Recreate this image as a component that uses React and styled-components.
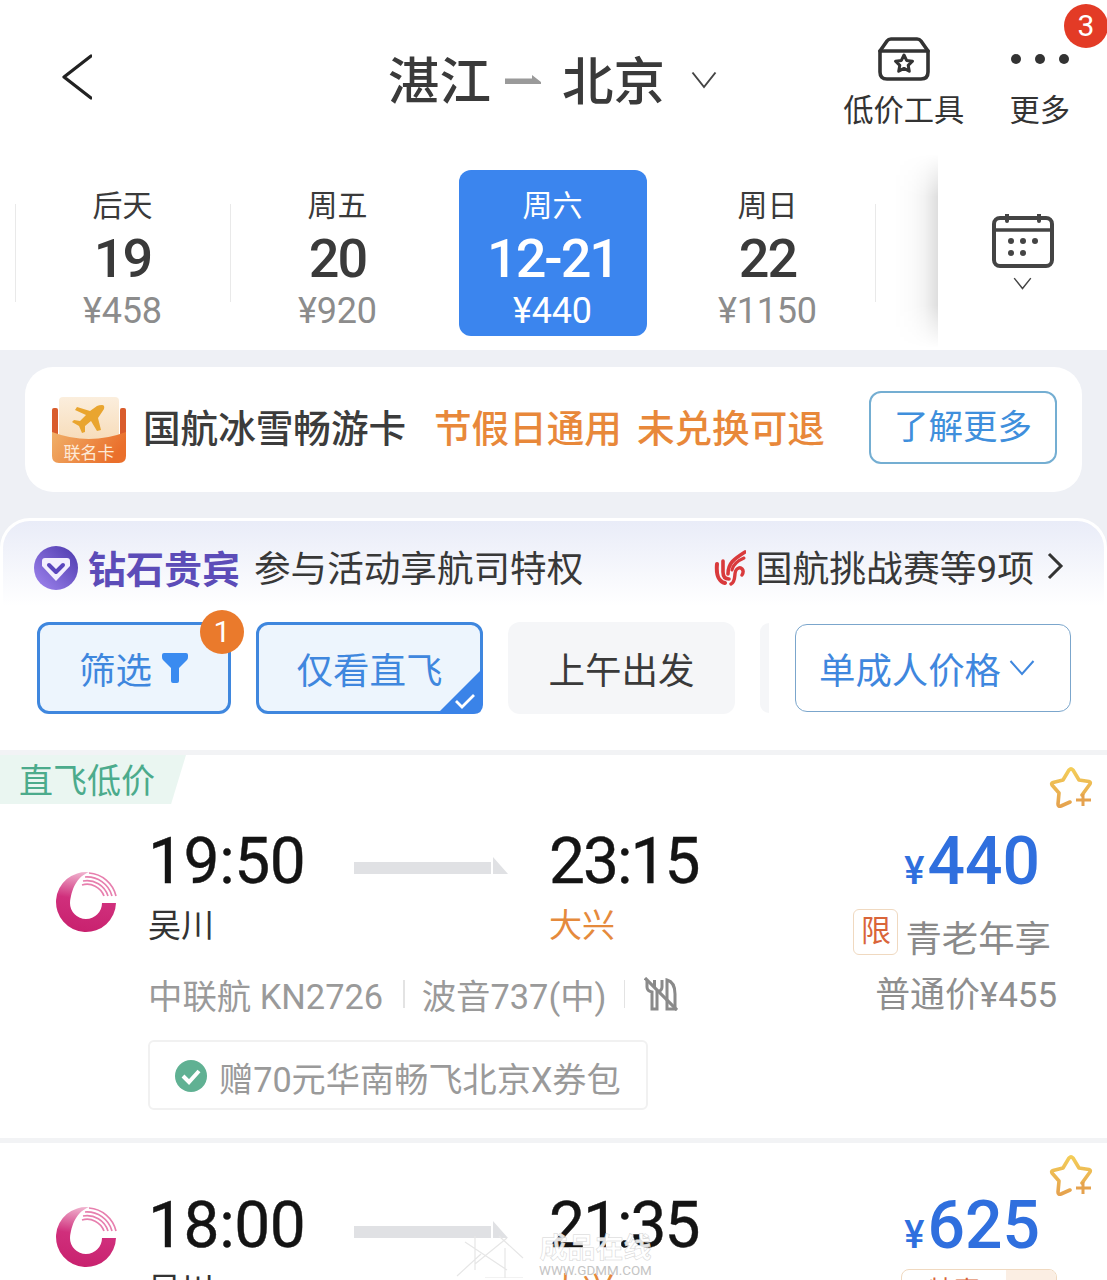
import React from "react";
import styled, { createGlobalStyle } from "styled-components";

const Global = createGlobalStyle`
  html, body { margin: 0; padding: 0; background: #fff; }
  * { box-sizing: border-box; }
`;

const Page = styled.div`
  position: relative;
  width: 1107px;
  height: 1280px;
  overflow: hidden;
  background: #fff;
  font-family: Roboto, "Noto Sans CJK SC", sans-serif;
  color: #333;
`;

/* header */
const Header = styled.header`
  display: flex;
  align-items: flex-start;
  height: 150px;
  padding: 0 37px 0 62px;
`;
const Back = styled.svg`
  width: 30px;
  height: 46px;
  margin-top: 54px;
  flex: none;
`;
const Title = styled.div`
  display: flex;
  align-items: center;
  height: 60px;
  margin: 53px 0 0 296px;
  font-size: 51.5px;
  font-weight: 500;
  line-height: 60px;
  color: #3a3a3a;
`;
const TitleArrow = styled.svg`
  width: 36px;
  height: 12px;
  margin: -6px 21px 0 14px;
`;
const TitleChevron = styled.svg`
  width: 26px;
  height: 18px;
  margin: -6px 0 0 26px;
`;
const Tools = styled.div`
  display: flex;
  gap: 45px;
  margin-left: auto;
  padding-top: 37px;
`;
const Tool = styled.div`
  display: flex;
  flex-direction: column;
  align-items: center;
`;
const ToolIcon = styled.div`
  display: flex;
  align-items: center;
  justify-content: center;
  height: 44px;
`;
const ToolLabel = styled.span`
  font-size: 30.3px;
  line-height: 40px;
  margin-top: 10px;
  color: #333;
`;
const Dot = styled.i`
  width: 10px;
  height: 10px;
  border-radius: 50%;
  background: #333;
`;
const Dots = styled.div`
  display: flex;
  gap: 14px;
`;
const RedBadge = styled.div`
  position: absolute;
  top: 4px;
  left: 1064px;
  width: 44px;
  height: 44px;
  border-radius: 50%;
  background: #e33b26;
  color: #fff;
  font-size: 30px;
  line-height: 44px;
  text-align: center;
`;

/* dates */
const DateBar = styled.section`
  display: flex;
  height: 200px;
  background: #fff;
`;
const DateTrack = styled.div`
  display: flex;
  width: 938px;
  padding: 20px 0 14px 15px;
`;
const DateCell = styled.div`
  position: relative;
  width: 215px;
  display: flex;
  justify-content: center;
  &::before {
    content: "";
    display: ${(p) => (p.$line ? "block" : "none")};
    position: absolute;
    ${(p) => (p.$line === "right" ? "right: -1px;" : "left: 0;")}
    top: 34px;
    height: 98px;
    width: 1px;
    background: #e9e9e9;
  }
`;
const DateBox = styled.div`
  width: 188px;
  height: 166px;
  padding-top: 16px;
  border-radius: 12px;
  display: flex;
  flex-direction: column;
  align-items: center;
  background: ${(p) => (p.$active ? "#3b85ee" : "transparent")};
  color: ${(p) => (p.$active ? "#fff" : "#3a3a3a")};
`;
const DayLabel = styled.span`
  font-size: 30px;
  line-height: 40px;
`;
const DayNum = styled.span`
  font-size: 54px;
  line-height: 66px;
  font-weight: 500;
  letter-spacing: -2px;
`;
const DayPrice = styled.span`
  font-size: 36px;
  line-height: 38px;
  letter-spacing: -0.2px;
  color: ${(p) => (p.$active ? "#fff" : "#8c8c8c")};
`;
const CalPanel = styled.div`
  position: relative;
  flex: 1;
  display: flex;
  flex-direction: column;
  align-items: center;
  padding-top: 64px;
  background: #fff;
  &::before {
    content: "";
    position: absolute;
    left: -44px;
    top: 4px;
    bottom: 2px;
    width: 44px;
    background: linear-gradient(to right, rgba(0,0,0,0) 0, rgba(0,0,0,0.02) 45%, rgba(0,0,0,0.05) 70%, rgba(0,0,0,0.13) 100%);
    -webkit-mask-image: linear-gradient(to bottom, transparent 0, #000 22%, #000 78%, transparent 100%);
    mask-image: linear-gradient(to bottom, transparent 0, #000 22%, #000 78%, transparent 100%);
  }
`;
const CalChevron = styled.svg`
  width: 19px;
  height: 13px;
  margin-top: 9px;
`;

/* banner & filters */
const Band = styled.div`
  background: #eef0f5;
  padding-top: 17px;
`;
const Banner = styled.div`
  display: flex;
  align-items: center;
  height: 125px;
  margin: 0 25px 26px;
  padding: 0 25px 0 26px;
  border-radius: 28px;
  background: #fff;
`;
const CardIcon = styled.div`
  position: relative;
  flex: none;
  width: 76px;
  height: 68px;
  margin-right: 16px;
`;
const CardName = styled.span`
  position: absolute;
  left: 0;
  right: 0;
  bottom: 1px;
  text-align: center;
  font-size: 17px;
  line-height: 20px;
  color: #fde9d6;
`;
const BannerTitle = styled.span`
  font-size: 37.6px;
  font-weight: 500;
  margin-top: -8px;
  color: #3c3c3c;
  white-space: nowrap;
`;
const Promo = styled.span`
  font-size: 37.6px;
  font-weight: 500;
  margin-top: -8px;
  color: #e8883a;
  margin-left: ${(p) => p.$gap}px;
  white-space: nowrap;
`;
const MoreBtn = styled.div`
  margin: -4px 0 0 auto;
  width: 188px;
  height: 73px;
  border: 2px solid #74aed2;
  border-radius: 12px;
  font-size: 34.5px;
  line-height: 69px;
  text-align: center;
  color: #3f8fdc;
  white-space: nowrap;
`;
const Panel = styled.section`
  height: 232px;
  padding: 24px 0 0;
  border: 3px solid #fff;
  border-bottom: 0;
  border-radius: 30px 30px 0 0;
  background: linear-gradient(to bottom, #e9ecf8 0, #fff 85px);
`;
const VipRow = styled.div`
  display: flex;
  align-items: center;
  height: 46px;
  padding: 0 40px 0 31px;
`;
const VipName = styled.span`
  font-size: 38px;
  font-weight: 700;
  color: #5c4cb8;
  margin: -4px 0 0 10px;
  white-space: nowrap;
`;
const VipText = styled.span`
  font-size: 36.6px;
  color: #383838;
  margin: -4px 0 0 14px;
  white-space: nowrap;
`;
const VipRight = styled.div`
  display: flex;
  align-items: center;
  margin-left: auto;
  font-size: 36.8px;
  color: #383838;
  white-space: nowrap;
`;
const VipRightText = styled.span`
  margin-top: -4px;
`;
const Chips = styled.div`
  display: flex;
  align-items: center;
  gap: 25px;
  margin-top: 31px;
  padding-left: 34px;
`;
const Chip = styled.div`
  position: relative;
  display: flex;
  align-items: center;
  justify-content: center;
  gap: 9px;
  width: ${(p) => p.$w}px;
  height: 92px;
  border-radius: 12px;
  font-size: 36.5px;
  white-space: nowrap;
  ${(p) =>
    p.$active
      ? "background:#edf5fd;border:3px solid #3f87de;color:#3f87de;"
      : "background:#f5f6f8;color:#3a3a3a;"}
`;
const ChipBadge = styled.div`
  position: absolute;
  top: -15px;
  right: -16px;
  width: 44px;
  height: 44px;
  border-radius: 50%;
  background: #ea7a2c;
  color: #fff;
  font-size: 30px;
  line-height: 44px;
  text-align: center;
`;
const ChipCorner = styled.svg`
  position: absolute;
  right: -3px;
  bottom: -3px;
  width: 46px;
  height: 46px;
`;
const Sliver = styled.div`
  width: 9px;
  height: 90px;
  border-radius: 10px 0 0 10px;
  background: #f5f6f8;
`;
const Dropdown = styled.div`
  display: flex;
  align-items: center;
  gap: 8px;
  width: 276px;
  height: 88px;
  margin-left: 1px;
  padding-left: 23px;
  border: 1.5px solid #7ba6cc;
  border-radius: 12px;
  font-size: 36.4px;
  color: #3f87de;
  white-space: nowrap;
  background: #fff;
`;
const Rule = styled.div`
  height: 5px;
  background: #f2f3f5;
`;

/* flights */
const Flight = styled.article`
  position: relative;
  height: ${(p) => p.$h}px;
`;
const Tag = styled.div`
  width: 186px;
  height: 49px;
  padding-left: 19px;
  background: #eaf6f1;
  clip-path: polygon(0 0, 100% 0, 92% 100%, 0 100%);
  font-size: 34px;
  line-height: 53px;
  color: #4cab8c;
  white-space: nowrap;
`;
const Star = styled.svg`
  position: absolute;
  right: 14px;
  top: ${(p) => p.$top}px;
  width: 44px;
  height: 44px;
`;
const Body = styled.div`
  display: grid;
  grid-template-columns: 148px 1fr auto;
  padding: ${(p) => p.$top}px 50px 0 0;
`;
const LogoCol = styled.div`
  padding: ${(p) => p.$top}px 0 0 55px;
`;
const Main = styled.div`
  display: flex;
  flex-direction: column;
  align-items: flex-start;
`;
const Times = styled.div`
  display: flex;
  align-items: center;
  height: 70px;
`;
const Time = styled.span`
  width: ${(p) => p.$w}px;
  font-size: 64px;
  line-height: 70px;
  font-weight: 400;
  letter-spacing: ${(p) => p.$ls}px;
  color: #141414;
  -webkit-text-stroke: 0.4px #141414;
`;
const FlightLine = styled.svg`
  width: 154px;
  height: 18px;
  margin: 7px 41px 0 0;
`;
const Ports = styled.div`
  display: flex;
  margin-top: 7px;
  font-size: 33px;
  line-height: 44px;
`;
const Port = styled.span`
  width: ${(p) => p.$w}px;
  color: ${(p) => p.$c};
`;
const Info = styled.div`
  display: flex;
  align-items: center;
  height: 44px;
  margin-top: 24px;
  font-size: 34.4px;
  color: #9a9a9a;
  white-space: nowrap;
`;
const Sep = styled.i`
  width: 1.5px;
  height: 28px;
  margin: 0 17px 0 ${(p) => p.$l}px;
  background: #e3e3e3;
`;
const MealSlot = styled.span`
  display: flex;
  margin-left: 2px;
`;
const Coupon = styled.div`
  display: flex;
  align-items: center;
  gap: 12px;
  width: 500px;
  height: 70px;
  margin-top: 24px;
  padding: 4px 0 0 25px;
  border: 2px solid #f1f1f1;
  border-radius: 6px;
  font-size: 34.2px;
  color: #9a9a9a;
  white-space: nowrap;
`;
const PriceCol = styled.div`
  display: flex;
  flex-direction: column;
  align-items: flex-end;
`;
const Price = styled.div`
  display: flex;
  align-items: baseline;
  height: 70px;
  margin-right: 17px;
  color: #2f6fde;
  font-weight: 500;
  font-size: 66px;
  line-height: 70px;
`;
const Yen = styled.span`
  font-size: 38px;
  margin-right: 3px;
`;
const Offer = styled.div`
  display: flex;
  align-items: center;
  gap: 7px;
  margin: 12px 6px 0 0;
  height: 46px;
  font-size: 36.4px;
  color: #8a8a8a;
  white-space: nowrap;
`;
const OfferText = styled.span`
  margin-top: 8px;
`;
const Limit = styled.span`
  width: 45px;
  height: 46px;
  border: 1.5px solid #f0d9c0;
  border-radius: 6px;
  font-size: 30px;
  line-height: 42px;
  text-align: center;
  color: #d9653a;
`;
const Regular = styled.div`
  margin-top: 19px;
  font-size: 34.9px;
  line-height: 44px;
  color: #8e8e8e;
  white-space: nowrap;
`;
const SmallTag = styled.div`
  display: flex;
  width: 156px;
  height: 46px;
  margin-top: 8px;
  border: 1.5px solid #f0d9c0;
  border-radius: 8px;
  overflow: hidden;
  font-size: 26px;
  color: #d9653a;
`;
const SmallTagLeft = styled.span`
  flex: 1;
  text-align: center;
`;
const SmallTagRight = styled.span`
  width: 50px;
  background: #fbeee3;
`;

/* watermark */
const Watermark = styled.div`
  position: absolute;
  left: 455px;
  top: 1234px;
  display: flex;
  gap: 14px;
  pointer-events: none;
`;
const WmText = styled.div`
  display: flex;
  flex-direction: column;
  align-items: center;
  color: rgba(255, 255, 255, 0.9);
`;
const WmCn = styled.span`
  font-size: 28px;
  line-height: 30px;
  -webkit-text-stroke: 0.5px #d2d2d2;
  font-weight: 700;
`;
const WmEn = styled.span`
  font-size: 13.4px;
  line-height: 14px;
  color: #c4c4c4;
`;

const BackIcon = () => (
  <Back viewBox="0 0 30 46">
    <path d="M29 2 L2 23 L29 44" fill="none" stroke="#222" strokeWidth="3.2" strokeLinecap="round" strokeLinejoin="round" />
  </Back>
);
const Chevron = ({ as: C = TitleChevron, vb = "0 0 26 18" }) => (
  <C viewBox={vb}>
    <path d="M1.5 1.5 L13 16 L24.5 1.5" fill="none" stroke="#444" strokeWidth="2" />
  </C>
);
const StarBox = () => (
  <svg width="52" height="44" viewBox="0 0 52 44">
    <g fill="none" stroke="#333" strokeWidth="3.6" strokeLinejoin="round" strokeLinecap="round">
      <path d="M2 14 L9 4 Q10.5 2 13 2 H39 Q41.5 2 43 4 L50 14" />
      <path d="M2 14 H50 V35 Q50 42 43 42 H9 Q2 42 2 35 Z" />
      <path d="M26 18 L28.6 23.4 L34.5 24.2 L30.2 28.3 L31.3 34.2 L26 31.4 L20.7 34.2 L21.8 28.3 L17.5 24.2 L23.4 23.4 Z" strokeWidth="3" />
    </g>
  </svg>
);
const Calendar = () => (
  <svg width="62" height="54" viewBox="0 0 62 54">
    <rect x="2" y="4" width="58" height="48" rx="6" fill="none" stroke="#444" strokeWidth="4" />
    <path d="M2 16 H60" stroke="#444" strokeWidth="3.6" />
    <path d="M15 0 V7 M47 0 V7" stroke="#444" strokeWidth="4" strokeLinecap="round" />
    <g fill="#444">
      <circle cx="19" cy="27" r="3" /><circle cx="31" cy="27" r="3" /><circle cx="43" cy="27" r="3" />
      <circle cx="19" cy="39" r="3" /><circle cx="31" cy="39" r="3" />
    </g>
  </svg>
);
const CardArt = () => (
  <svg width="76" height="68" viewBox="0 0 76 68">
    <defs>
      <linearGradient id="cardTop" x1="0" y1="0" x2="0" y2="1"><stop offset="0" stopColor="#fbeedd" /><stop offset="1" stopColor="#f7dcb9" /></linearGradient>
      <linearGradient id="cardBot" x1="0" y1="0" x2="1" y2="0.3"><stop offset="0" stopColor="#f0b069" /><stop offset="1" stopColor="#ea6f2b" /></linearGradient>
    </defs>
    <rect x="1" y="12" width="6" height="28" rx="2" fill="#d95c2c" />
    <rect x="69" y="12" width="6" height="28" rx="2" fill="#d95c2c" />
    <rect x="8" y="1" width="60" height="44" rx="4" fill="url(#cardTop)" />
    <path d="M1 36 Q38 50 75 36 V60 Q75 67 68 67 H8 Q1 67 1 60 Z" fill="url(#cardBot)" />
    <path d="M51 9 Q54 9 53 13 L47 22 L50 34 L46 35 L40 25 L34 30 L34 36 L31 37 L28 30 L21 26 L23 24 L29 25 L35 19 L24 14 L26 11 L39 15 L46 10 Q48 9 51 9 Z" fill="#e9a52f" />
  </svg>
);
const Diamond = () => (
  <svg width="44" height="44" viewBox="0 0 44 44" style={{ flex: "none" }}>
    <defs>
      <linearGradient id="dia" x1="0" y1="1" x2="1" y2="0"><stop offset="0" stopColor="#a186f0" /><stop offset="1" stopColor="#4b38ac" /></linearGradient>
    </defs>
    <circle cx="22" cy="22" r="22" fill="url(#dia)" />
    <path d="M11 12 H33 Q36 12 36 15 V20 L22 35 L8 20 V15 Q8 12 11 12 Z" fill="#f3effd" />
    <path d="M15 19 L22 26 L29 19" fill="none" stroke="#5b46bd" strokeWidth="4" strokeLinecap="round" strokeLinejoin="round" />
  </svg>
);
const AirChina = () => (
  <svg width="32" height="36" viewBox="0 0 32 36" style={{ marginRight: 10, flex: "none" }}>
    <g fill="none" stroke="#d93a3c" strokeLinecap="round">
      <path d="M3 14 C2 25 4 31 11 33" strokeWidth="4" />
      <path d="M9 11 V22 C9 27 11 29 15 29" strokeWidth="3.6" />
      <path d="M14 24 C14 13 20 9 31 2" strokeWidth="3.6" />
      <path d="M18 20 C19 15 23 11 30 8" strokeWidth="3" />
      <path d="M17 34 C23 31 19 22 23 19 C27 16 31 20 28 25" strokeWidth="3.4" />
    </g>
  </svg>
);
const RightArrow = () => (
  <svg width="18" height="30" viewBox="0 0 18 30" style={{ marginLeft: 12, marginTop: -4 }}>
    <path d="M3 3 L15 15 L3 27" fill="none" stroke="#333" strokeWidth="3" />
  </svg>
);
const Funnel = () => (
  <svg width="28" height="30" viewBox="0 0 28 30">
    <path d="M1 2 Q1 0 3 0 H25 Q27 0 27 2 V4 Q27 6 26 7 L18 15 V28 Q18 30 16 30 H12 Q10 30 10 28 V15 L2 7 Q1 6 1 4 Z" fill="#3a8bf0" />
  </svg>
);
const Corner = () => (
  <ChipCorner viewBox="0 0 46 46">
    <path d="M46 0 V36 Q46 46 36 46 H0 Z" fill="#3a83e8" />
    <path d="M19 33 L25 39 L37 27" fill="none" stroke="#fff" strokeWidth="2.8" />
  </ChipCorner>
);
const StarPlus = ({ top }) => (
  <Star $top={top} viewBox="0 0 44 44">
    <defs>
      <linearGradient id="starG" x1="0" y1="0" x2="0" y2="1"><stop offset="0" stopColor="#f3cc58" /><stop offset="1" stopColor="#e5a24e" /></linearGradient>
    </defs>
    <path d="M33 28 L41 17 Q42 15 40 14.5 L30 13 L24 3 Q22 1 20 3 L14 13 L4 15.5 Q2 16 3 18 L10 26 L9 37 Q9 40 12 39 L21 35" fill="none" stroke="url(#starG)" strokeWidth="3.6" strokeLinecap="round" strokeLinejoin="round" />
    <path d="M34 27 V39 M27 33 H42" stroke="#e5a24e" strokeWidth="3" />
  </Star>
);
const Unicom = () => (
  <svg width="62" height="65" viewBox="0 0 62 65">
    <defs>
      <linearGradient id="uni" x1="0.3" y1="1" x2="0.45" y2="0"><stop offset="0" stopColor="#c8216e" /><stop offset="0.55" stopColor="#d02f7c" /><stop offset="1" stopColor="#f0b4cf" /></linearGradient>
    </defs>
    <path d="M61 33 A30 30 0 1 1 34 2.2 C22 6 16 20 15 33 A16 16 0 1 0 47 33 Z" fill="url(#uni)" />
    <g fill="none" stroke="#e77fae" strokeWidth="1.7">
      <path d="M34 3 A30 30 0 0 1 61 26" />
      <path d="M30 7 A26 26 0 0 1 57 26" />
      <path d="M28 11 A22 22 0 0 1 53 26" />
      <path d="M27 15 A18 18 0 0 1 49 26" />
    </g>
  </svg>
);
const LineArrow = () => (
  <FlightLine viewBox="0 0 154 18">
    <path d="M0 5 H137 V17 H0 Z M139 0 L154 17 H139 Z" fill="#e0e1e4" />
  </FlightLine>
);
const NoMeal = () => (
  <svg width="34" height="34" viewBox="0 0 34 34">
    <g fill="none" stroke="#8a8a8a" strokeWidth="3">
      <path d="M3 3 V10 Q3 14 8 15 V32 H13 V15 Q18 14 18 10 V3" />
      <path d="M10.5 3 V10" />
      <path d="M23 32 V3 Q31 5 31 17 V32 Z" />
      <path d="M1 1 L33 33" strokeWidth="3.2" />
    </g>
  </svg>
);
const Check = () => (
  <svg width="32" height="32" viewBox="0 0 32 32" style={{ flex: "none", marginTop: -2 }}>
    <circle cx="16" cy="16" r="16" fill="#60b193" />
    <path d="M8 16 L14 22 L24 11" fill="none" stroke="#fff" strokeWidth="4" />
  </svg>
);
const WmLogo = () => (
  <svg width="70" height="44" viewBox="0 0 70 44">
    <g fill="none" stroke="#e6e6e6" strokeWidth="1.2">
      <path d="M20 2 V36 M10 8 L52 36 M52 4 L20 30 M2 42 L26 20 M50 14 V44 M30 44 H68 M44 2 L68 24" />
    </g>
  </svg>
);

const FlightBody = ({ top, logoTop, dep, arr, price, children }) => (
  <Body $top={top}>
    <LogoCol $top={logoTop}><Unicom /></LogoCol>
    <Main>
      <Times>
        <Time $w={206} $ls={-0.4}>{dep}</Time>
        <LineArrow />
        <Time $ls={-2}>{arr}</Time>
      </Times>
      <Ports>
        <Port $w={401} $c="#333">吴川</Port>
        <Port $c="#e58a3c">大兴</Port>
      </Ports>
      {children && children[0]}
    </Main>
    <PriceCol>
      <Price><Yen>¥</Yen>{price}</Price>
      {children && children[1]}
    </PriceCol>
  </Body>
);

const days = [
  { l: "后天", n: "19", p: "¥458", line: "left" },
  { l: "周五", n: "20", p: "¥920", line: "left" },
  { l: "周六", n: "12-21", p: "¥440", active: true },
  { l: "周日", n: "22", p: "¥1150", line: "right" },
];

export default function App() {
  return (
    <Page>
      <Global />
      <Header>
        <BackIcon />
        <Title>
          湛江
          <TitleArrow viewBox="0 0 36 12">
            <path d="M0 4.5 H27 V1 L36 8 V10 H0 Z" fill="#9a9a9a" />
          </TitleArrow>
          北京
          <Chevron />
        </Title>
        <Tools>
          <Tool>
            <ToolIcon><StarBox /></ToolIcon>
            <ToolLabel>低价工具</ToolLabel>
          </Tool>
          <Tool>
            <ToolIcon><Dots><Dot /><Dot /><Dot /></Dots></ToolIcon>
            <ToolLabel>更多</ToolLabel>
          </Tool>
        </Tools>
      </Header>
      <RedBadge>3</RedBadge>

      <DateBar>
        <DateTrack>
          {days.map((d) => (
            <DateCell key={d.l} $line={d.line}>
              <DateBox $active={d.active}>
                <DayLabel>{d.l}</DayLabel>
                <DayNum>{d.n}</DayNum>
                <DayPrice $active={d.active}>{d.p}</DayPrice>
              </DateBox>
            </DateCell>
          ))}
        </DateTrack>
        <CalPanel>
          <Calendar />
          <Chevron as={CalChevron} />
        </CalPanel>
      </DateBar>

      <Band>
        <Banner>
          <CardIcon>
            <CardArt />
            <CardName>联名卡</CardName>
          </CardIcon>
          <BannerTitle>国航冰雪畅游卡</BannerTitle>
          <Promo $gap={28}>节假日通用</Promo>
          <Promo $gap={15}>未兑换可退</Promo>
          <MoreBtn>了解更多</MoreBtn>
        </Banner>
        <Panel>
          <VipRow>
            <Diamond />
            <VipName>钻石贵宾</VipName>
            <VipText>参与活动享航司特权</VipText>
            <VipRight>
              <AirChina />
              <VipRightText>国航挑战赛等9项</VipRightText>
              <RightArrow />
            </VipRight>
          </VipRow>
          <Chips>
            <Chip $active $w={194}>
              筛选 <Funnel />
              <ChipBadge>1</ChipBadge>
            </Chip>
            <Chip $active $w={227}>
              仅看直飞
              <Corner />
            </Chip>
            <Chip $w={227}>上午出发</Chip>
            <Sliver />
            <Dropdown>
              单成人价格
              <svg width="26" height="18" viewBox="0 0 26 18">
                <path d="M1.5 2 L13 15 L24.5 2" fill="none" stroke="#3f87de" strokeWidth="2" />
              </svg>
            </Dropdown>
          </Chips>
        </Panel>
      </Band>
      <Rule />

      <Flight $h={383}>
        <Tag>直飞低价</Tag>
        <StarPlus top={12} />
        <FlightBody top={23} logoTop={43} dep="19:50" arr="23:15" price="440">
          {[
            <React.Fragment key="a">
              <Info>
                中联航 KN2726
                <Sep $l={20} />
                波音737(中)
                <Sep $l={17} />
                <MealSlot><NoMeal /></MealSlot>
              </Info>
              <Coupon><Check />赠70元华南畅飞北京X券包</Coupon>
            </React.Fragment>,
            <React.Fragment key="b">
              <Offer><Limit>限</Limit><OfferText>青老年享</OfferText></Offer>
              <Regular>普通价¥455</Regular>
            </React.Fragment>,
          ]}
        </FlightBody>
      </Flight>
      <Rule />
      <Flight $h={140}>
        <StarPlus top={12} />
        <FlightBody top={48} logoTop={14} dep="18:00" arr="21:35" price="625">
          {[
            null,
            <SmallTag key="t"><SmallTagLeft>特惠</SmallTagLeft><SmallTagRight /></SmallTag>,
          ]}
        </FlightBody>
      </Flight>

      <Watermark>
        <WmLogo />
        <WmText>
          <WmCn>成品在线</WmCn>
          <WmEn>WWW.GDMM.COM</WmEn>
        </WmText>
      </Watermark>
    </Page>
  );
}
